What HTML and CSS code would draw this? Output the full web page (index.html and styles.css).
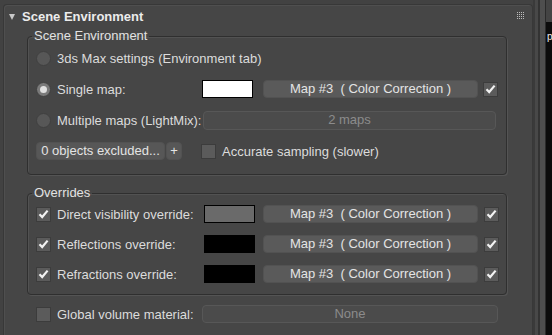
FILE: index.html
```html
<!DOCTYPE html>
<html lang="en">
<head>
    <meta charset="UTF-8">
    <title>Scene Environment</title>
    <link rel="stylesheet" href="styles.css">
</head>
<body>
    <div class="page">
        <div class="rollout">
            <div class="rollout-head">
                <span class="tri"></span>
                <span class="title">Scene Environment</span>
                <svg class="grip" width="7" height="7" viewBox="0 0 7 7">
                    <g fill="#bdbdbd">
                        <rect x="0" y="0" width="1" height="1"/><rect x="2" y="0" width="1" height="1"/><rect x="4" y="0" width="1" height="1"/><rect x="6" y="0" width="1" height="1"/>
                        <rect x="0" y="2" width="1" height="1"/><rect x="2" y="2" width="1" height="1"/><rect x="4" y="2" width="1" height="1"/><rect x="6" y="2" width="1" height="1"/>
                        <rect x="0" y="4" width="1" height="1"/><rect x="2" y="4" width="1" height="1"/><rect x="4" y="4" width="1" height="1"/><rect x="6" y="4" width="1" height="1"/>
                        <rect x="0" y="6" width="1" height="1"/><rect x="2" y="6" width="1" height="1"/><rect x="4" y="6" width="1" height="1"/><rect x="6" y="6" width="1" height="1"/>
                    </g>
                </svg>
            </div>

            <fieldset class="group g1">
                <legend>Scene Environment</legend>
                <div class="rows">
                    <div class="row">
                        <span class="radio"></span>
                        <span>3ds Max settings (Environment tab)</span>
                    </div>
                    <div class="row">
                        <span class="lbl"><span class="radio on"></span>Single map:</span>
                        <span class="swatch white"></span>
                        <button class="btn map">Map #3  ( Color Correction )</button>
                        <span class="check on"><svg width="11" height="10" viewBox="0 0 11 10"><path d="M1.5 5.2 L4.2 8 L9.6 1.6" fill="none" stroke="#f2f2f2" stroke-width="2.2"/></svg></span>
                    </div>
                    <div class="row">
                        <span class="lbl"><span class="radio"></span>Multiple maps (LightMix):</span>
                        <button class="btn dis wide">2 maps</button>
                    </div>
                    <div class="row">
                        <button class="btn excl">0 objects excluded...</button>
                        <button class="btn plus">+</button>
                        <span class="check gap"></span>
                        <span class="after">Accurate sampling (slower)</span>
                    </div>
                </div>
            </fieldset>

            <fieldset class="group g2">
                <legend>Overrides</legend>
                <div class="rows">
                    <div class="row">
                        <span class="lbl"><span class="check on first"><svg width="11" height="10" viewBox="0 0 11 10"><path d="M1.5 5.2 L4.2 8 L9.6 1.6" fill="none" stroke="#f2f2f2" stroke-width="2.2"/></svg></span>Direct visibility override:</span>
                        <span class="swatch grey"></span>
                        <button class="btn map">Map #3  ( Color Correction )</button>
                        <span class="check on"><svg width="11" height="10" viewBox="0 0 11 10"><path d="M1.5 5.2 L4.2 8 L9.6 1.6" fill="none" stroke="#f2f2f2" stroke-width="2.2"/></svg></span>
                    </div>
                    <div class="row">
                        <span class="lbl"><span class="check on first"><svg width="11" height="10" viewBox="0 0 11 10"><path d="M1.5 5.2 L4.2 8 L9.6 1.6" fill="none" stroke="#f2f2f2" stroke-width="2.2"/></svg></span>Reflections override:</span>
                        <span class="swatch black"></span>
                        <button class="btn map">Map #3  ( Color Correction )</button>
                        <span class="check on"><svg width="11" height="10" viewBox="0 0 11 10"><path d="M1.5 5.2 L4.2 8 L9.6 1.6" fill="none" stroke="#f2f2f2" stroke-width="2.2"/></svg></span>
                    </div>
                    <div class="row">
                        <span class="lbl"><span class="check on first"><svg width="11" height="10" viewBox="0 0 11 10"><path d="M1.5 5.2 L4.2 8 L9.6 1.6" fill="none" stroke="#f2f2f2" stroke-width="2.2"/></svg></span>Refractions override:</span>
                        <span class="swatch black"></span>
                        <button class="btn map">Map #3  ( Color Correction )</button>
                        <span class="check on"><svg width="11" height="10" viewBox="0 0 11 10"><path d="M1.5 5.2 L4.2 8 L9.6 1.6" fill="none" stroke="#f2f2f2" stroke-width="2.2"/></svg></span>
                    </div>
                </div>
            </fieldset>

            <div class="row global">
                <span class="lbl"><span class="check first"></span>Global volume material:</span>
                <button class="btn dis none">None</button>
            </div>
        </div>

        <div class="side">
            <div class="sb sb1"></div>
            <div class="sb sb2"></div>
            <div class="sb sb3"></div>
            <div class="sb sb4"></div>
            <div class="sb sb5"></div>
            <div class="sb-edge">
                <div class="sb-top"></div>
                <div class="sb-dark"><span>p</span></div>
            </div>
        </div>
    </div>
</body>
</html>
```

FILE: styles.css
```css
body {
    margin: 0;
    background-color: #424242;
    font-family: "Liberation Sans", Arial, sans-serif;
    font-size: 13px;
    color: #dcdcdc;
    height: 335px;
    overflow: hidden;
}
.page {
    display: flex;
    height: 335px;
}
.rollout {
    width: 530px;
    box-sizing: border-box;
    margin: 4px 0 0 3px;
    border: 1px solid #383838;
    border-bottom: none;
    border-radius: 4px 4px 0 0;
    background-color: #464646;
    box-shadow: inset 1px 1px 0 #4f4f4f;
    flex: none;
}
.rollout-head {
    display: flex;
    align-items: center;
    height: 23px;
    padding-left: 5px;
}
.tri {
    width: 0;
    height: 0;
    border-left: 3.5px solid transparent;
    border-right: 3.5px solid transparent;
    border-top: 6px solid #c8c8c8;
    margin-right: 7px;
}
.title {
    font-weight: bold;
    color: #ececec;
}
.grip {
    margin-left: auto;
    margin-right: 8px;
    margin-top: -3px;
}

/* group boxes */
.group {
    width: 480px;
    box-sizing: border-box;
    margin: 1px 0 0 23px;
    padding: 0 8px 13px 8px;
    border: 1px solid #2f2f2f;
    border-radius: 4px;
    box-shadow: 1px 1px 0 #545454, inset 1px 1px 0 #525252;
    min-width: 0;
}
.group legend {
    padding: 0 2px;
    margin-left: -4px;
    line-height: 14px;
    color: #e2e2e2;
}
.g2 {
    margin-top: 11px;
    padding-bottom: 11px;
}
.rows {
    display: flex;
    flex-direction: column;
    gap: 11px;
    padding-top: 5px;
}
.g2 .rows {
    gap: 12px;
}
.row {
    display: flex;
    align-items: center;
    height: 20px;
}
.g2 .row,
.global {
    height: 18px;
}
.lbl {
    display: flex;
    align-items: center;
    width: 166px;
    flex: none;
}
.g2 .lbl {
    width: 168px;
}

/* controls */
.radio {
    width: 15px;
    height: 15px;
    box-sizing: border-box;
    border-radius: 50%;
    background-color: #575757;
    border: 1px solid #404040;
    margin-right: 6px;
    flex: none;
    display: flex;
    align-items: center;
    justify-content: center;
}
.radio.on {
    background-color: #7a7a7a;
}
.radio.on::after {
    content: "";
    width: 7px;
    height: 7px;
    border-radius: 50%;
    background-color: #e0e0e0;
}
.check {
    width: 15px;
    height: 15px;
    box-sizing: border-box;
    background-color: #5b5b5b;
    border: 1px solid #3c3c3c;
    margin-left: 5px;
    flex: none;
    display: flex;
    align-items: center;
    justify-content: center;
}
.check.first {
    margin-left: 0;
    margin-right: 6px;
}
.g2 .row > .check {
    margin-left: 6px;
}
.check.gap {
    margin-left: 19px;
    margin-right: 6px;
}
.swatch {
    width: 51px;
    height: 18px;
    box-sizing: border-box;
    border: 1px solid #000;
    flex: none;
}
.swatch.white { background-color: #fff; }
.swatch.grey { background-color: #6a6a6a; }
.swatch.black { background-color: #000; }

.btn {
    font: inherit;
    color: #e4e4e4;
    background-color: #5a5a5a;
    border: 1px solid #525252;
    border-radius: 4px;
    height: 18px;
    padding: 0;
    line-height: 16px;
    white-space: pre;
    text-align: center;
    flex: none;
}
.btn.map {
    width: 215px;
    margin-left: 10px;
}
.g2 .btn.map {
    margin-left: 8px;
}
.btn.dis {
    background-color: #4b4b4b;
    border-color: #575757;
    color: #8c8c8c;
}
.btn.wide {
    flex: 1;
    height: 19px;
    margin: 0 2px 0 1px;
}
.btn.excl {
    width: 129px;
    background-color: #575757;
}
.btn.plus {
    width: 16px;
    margin-left: 1px;
    background-color: #575757;
}
.global {
    margin: 10px 0 0 32px;
    width: 462px;
}
.btn.none {
    width: 296px;
}

/* right-hand strip */
.side {
    flex: 1;
    display: flex;
}
.sb { flex: none; }
.sb1 { width: 2px; background-color: #3a3a3a; }
.sb2 { width: 3px; background-color: #484848; }
.sb3 { width: 2px; background-color: #333; }
.sb4 { width: 5px; background-color: #4e4e4e; }
.sb5 { width: 1px; background-color: #2b2b2b; }
.sb-edge {
    flex: 1;
    display: flex;
    flex-direction: column;
    overflow: hidden;
}
.sb-top {
    height: 22px;
    background-color: #444;
}
.sb-dark {
    flex: 1;
    background-color: #0c0c0c;
    color: #eee;
    font-size: 10px;
    padding: 9px 0 0 1px;
}
```
